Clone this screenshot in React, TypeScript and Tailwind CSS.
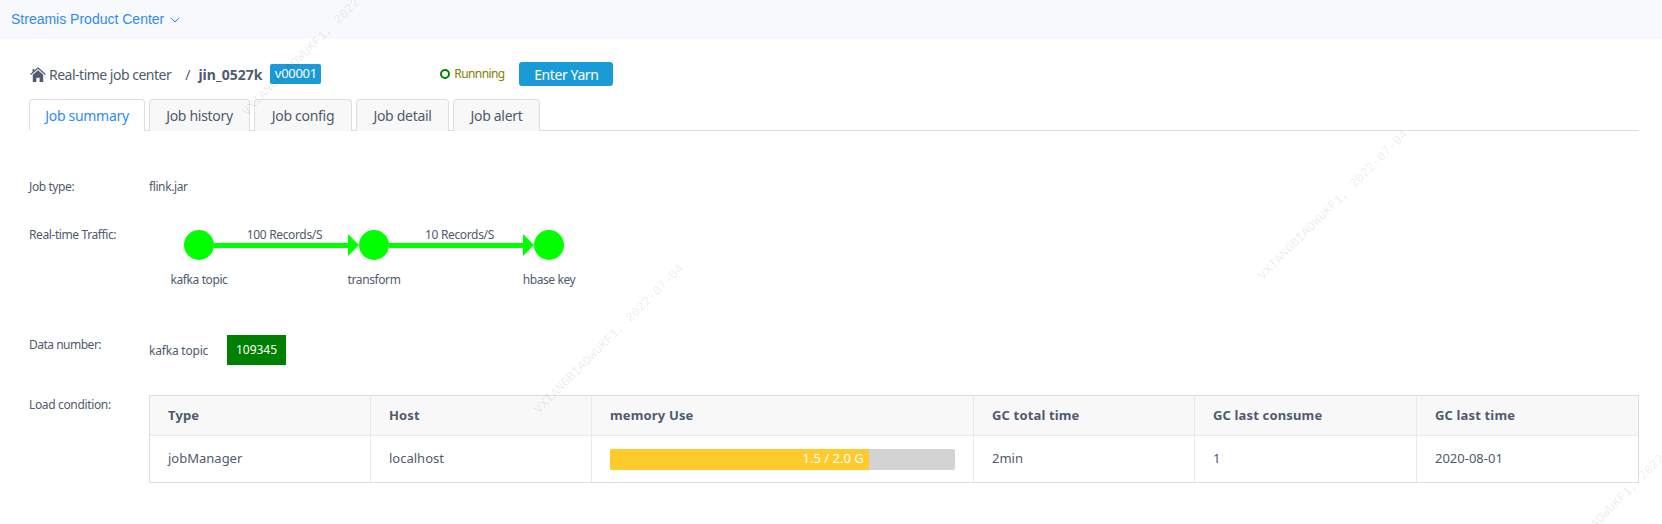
import { ChevronDown } from 'lucide-react'

const tabs = [
  { label: 'Job summary', width: 'w-[116px]' },
  { label: 'Job history', width: 'w-[101px]' },
  { label: 'Job config', width: 'w-[98px]' },
  { label: 'Job detail', width: 'w-[93px]' },
  { label: 'Job alert', width: 'w-[87px]' },
]

const headers = [
  { label: 'Type', width: 'w-[221px]' },
  { label: 'Host', width: 'w-[221px]' },
  { label: 'memory Use', width: 'w-[382px]' },
  { label: 'GC total time', width: 'w-[221px]' },
  { label: 'GC last consume', width: 'w-[222px]' },
  { label: 'GC last time', width: 'flex-1' },
]

const darkMarks = [
  [317, 41],
  [609, 339],
  [1333, 205],
  [1622, 497],
]

// faint watermark layer repeats on a skewed grid
const faintMarks = [
  [148, 43], [249, 143], [350, 243], [451, 343], [552, 443], [98, 493],
  [602, -7], [703, 93], [804, 193], [904, 293], [1006, 393], [1107, 493],
  [1157, 43], [1258, 145], [1357, 243], [1460, 345], [1563, 445],
  [1611, -7], [1712, 93],
]

function HomeIcon() {
  return (
    <svg width="16" height="15" viewBox="0 0 16 15" className="ml-[1px] text-[#515a6e]" aria-hidden="true">
      <path d="M0.6 7.6 8 1l7.4 6.6" fill="none" stroke="currentColor" strokeWidth="1.3" />
      <path d="M2.6 2h1.8v2.2l-1.8 1.6z" fill="currentColor" />
      <path d="M8 3.2 13.2 7.8V15H9.6v-4.2H6.4V15H2.8V7.8z" fill="currentColor" />
    </svg>
  )
}

function Node({ label }: { label: string }) {
  return (
    <div className="flex w-[30px] flex-col items-center">
      <div className="h-[30px] w-[30px] rounded-full bg-[#00ff00]" />
      <div className="mt-[11px] whitespace-nowrap text-[12px] leading-[18px] tracking-[-0.4px]">{label}</div>
    </div>
  )
}

function Edge({ label }: { label: string }) {
  return (
    <div className="relative flex h-[30px] w-[145px] items-center">
      <div className="h-[5px] flex-1 bg-[#00ff00]" />
      <div className="h-0 w-0 border-y-[11px] border-l-[11px] border-y-transparent border-l-[#00ff00]" />
      <div className="absolute inset-x-0 top-[-4px] pr-1 text-center text-[12px] leading-[18px] tracking-[-0.35px]">{label}</div>
    </div>
  )
}

export default function App() {
  return (
    <div className="relative h-[524px] w-[1662px] overflow-hidden bg-white font-['Noto_Sans',sans-serif] text-[#515a6e]">
      <div className="flex h-[39px] items-center gap-[3px] bg-[#f7f9fc] pl-[11px] font-['Liberation_Sans',sans-serif] text-[14px] text-[#2d8cf0]">
        <span>Streamis Product Center</span>
        <ChevronDown size={16} strokeWidth={1.5} />
      </div>

      <div className="pl-[29px] pr-[23px]">
        <div className="mt-[23px] flex h-[24px] items-center">
          <HomeIcon />
          <span className="ml-[3px] text-[14px] tracking-[-0.5px]">Real-time job center</span>
          <span className="ml-[14px] text-[14px]">/</span>
          <span className="ml-[8px] text-[14px] font-bold">jin_0527k</span>
          <span className="ml-[8px] flex h-[20px] w-[51px] items-center justify-center rounded-[2px] bg-[#1a9ad6] text-[13px] tracking-[-0.3px] text-white">v00001</span>
          <span className="ml-[119px] h-[10px] w-[10px] rounded-full border-2 border-[#008000]" />
          <span className="ml-[4px] w-[50px] text-[12px] tracking-[-0.6px] text-[#808000]">Runnning</span>
          <button type="button" className="ml-[15px] h-[24px] w-[94px] rounded-[3px] bg-[#1a9ad6] text-[14px] tracking-[-0.4px] text-white">Enter Yarn</button>
        </div>

        <div className="mt-[13px] flex h-[32px] gap-[4px] border-b border-[#dcdee2]">
          {tabs.map((tab, index) => (
            <div
              key={tab.label}
              className={`${tab.width} flex h-[32px] items-center justify-center rounded-t-[4px] border text-[14px] tracking-[-0.3px] ${index === 0 ? 'border-[#dcdee2] border-b-white bg-white text-[#2d8cf0]' : 'border-[#dcdee2] border-b-0 bg-[#f8f8f9]'}`}
            >
              {tab.label}
            </div>
          ))}
        </div>

        <div className="mt-[47px] flex h-[18px] items-center text-[12px] tracking-[-0.4px]">
          <div className="w-[120px]">Job type:</div>
          <div>flink.jar</div>
        </div>

        <div className="mt-[20px] flex text-[12px]">
          <div className="w-[155px] pt-[10px] leading-[18px] tracking-[-0.4px]">Real-time Traffic:</div>
          <div className="flex pt-[14px]">
            <Node label="kafka topic" />
            <Edge label="100 Records/S" />
            <Node label="transform" />
            <Edge label="10 Records/S" />
            <Node label="hbase key" />
          </div>
        </div>

        <div className="mt-[46px] flex h-[30px] items-center text-[12px]">
          <div className="w-[120px] pb-[10px] tracking-[-0.5px]">Data number:</div>
          <div className="w-[78px] pt-[2px] tracking-[-0.2px]">kafka topic</div>
          <div className="flex h-[30px] w-[59px] items-center justify-center bg-[#008000] text-white">109345</div>
        </div>

        <div className="mt-[30px] flex text-[12px]">
          <div className="w-[120px] pt-[1px] tracking-[-0.35px]">Load condition:</div>
          <div className="w-[1490px] border border-[#dcdee2]">
            <div className="flex h-[40px] items-center border-b border-[#e8eaec] bg-[#f8f8f9] text-[13px] font-bold tracking-[0.15px]">
              {headers.map((header, index) => (
                <div key={header.label} className={`${header.width} flex h-full items-center pl-[18px] ${index < 5 ? 'border-r border-[#e8eaec]' : ''}`}>
                  {header.label}
                </div>
              ))}
            </div>
            <div className="flex h-[46px] items-center text-[13px]">
              <div className="flex h-full w-[221px] items-center border-r border-[#e8eaec] pl-[18px]">jobManager</div>
              <div className="flex h-full w-[221px] items-center border-r border-[#e8eaec] pl-[18px]">localhost</div>
              <div className="flex h-full w-[382px] items-center border-r border-[#e8eaec] pl-[18px]">
                <div className="h-[21px] w-[345px] overflow-hidden rounded-[2px] bg-[#d3d3d3]">
                  <div className="flex h-full w-[75%] items-center justify-end bg-[#ffca2c] pr-[5px] text-white">1.5 / 2.0 G</div>
                </div>
              </div>
              <div className="flex h-full w-[221px] items-center border-r border-[#e8eaec] pl-[18px]">2min</div>
              <div className="flex h-full w-[222px] items-center border-r border-[#e8eaec] pl-[18px]">1</div>
              <div className="flex h-full flex-1 items-center pl-[18px]">2020-08-01</div>
            </div>
          </div>
        </div>
      </div>

      {faintMarks.map(([x, y]) => (
        <div
          key={`${x}-${y}`}
          className="pointer-events-none absolute -translate-x-1/2 -translate-y-1/2 -rotate-45 whitespace-nowrap font-['Liberation_Mono',monospace] text-[16.7px] text-black/[0.025]"
          style={{ left: x, top: y }}
        >
          VXIANGBIAOWUKF1, 2022-07-04
        </div>
      ))}
      {darkMarks.map(([x, y]) => (
        <div
          key={`${x}-${y}`}
          className="pointer-events-none absolute -translate-x-1/2 -translate-y-1/2 -rotate-45 whitespace-nowrap font-['Liberation_Mono',monospace] text-[12.7px] text-black/[0.09]"
          style={{ left: x, top: y }}
        >
          VXIANGBIAOWUKF1, 2022-07-04
        </div>
      ))}
    </div>
  )
}
